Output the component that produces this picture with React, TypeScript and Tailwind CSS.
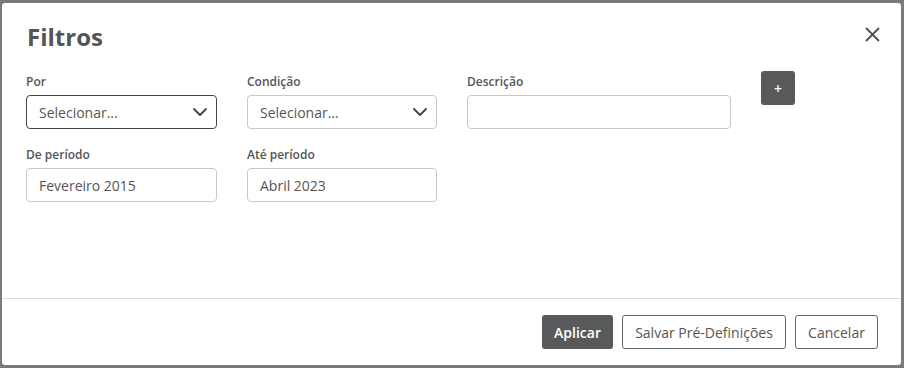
import { useState } from "react";

function Chevron() {
  return (
    <svg width="14" height="8" viewBox="0 0 14 8" fill="none" className="shrink-0">
      <path d="M1 1l6 6 6-6" stroke="#444" strokeWidth="1.8" strokeLinecap="round" strokeLinejoin="round" />
    </svg>
  );
}

interface FieldProps {
  label: string;
  width: string;
  children: React.ReactNode;
}

function Field({ label, width, children }: FieldProps) {
  return (
    <div className={`flex flex-col ${width}`}>
      <label className="text-[12px] leading-[17px] font-semibold text-[#555] mb-[5px]">{label}</label>
      {children}
    </div>
  );
}

function SelectBox({ focused }: { focused?: boolean }) {
  return (
    <div
      className={`h-[34px] rounded-[4px] border flex items-center justify-between pl-3 pr-[9px] text-[14px] text-[#555] ${
        focused ? "border-[#444]" : "border-[#c8c8c8]"
      }`}
    >
      <span>Selecionar...</span>
      <Chevron />
    </div>
  );
}

function TextBox({ value }: { value?: string }) {
  return (
    <div className="h-[34px] rounded-[4px] border border-[#c8c8c8] flex items-center px-3 text-[14px] text-[#555]">
      {value}
    </div>
  );
}

export default function App() {
  const [open] = useState(true);

  return (
    <div className="w-[904px] h-[368px] bg-[#7b7b7b] pt-[3px] pl-[2px]" style={{ fontFamily: '"Open Sans", sans-serif' }}>
      {open && (
        <div className="w-[899px] h-[362px] bg-white rounded-[3px] flex flex-col">
          <div className="flex-1 pt-[17px] pl-[24px] pr-[21px]">
            <div className="flex items-start justify-between">
              <h1 className="text-[24px] leading-[33px] font-bold text-[#555] ml-[1px]">Filtros</h1>
              <svg width="15" height="15" viewBox="0 0 15 15" className="mt-[7px]">
                <path d="M1.5 1.5l12 12M13.5 1.5l-12 12" stroke="#4f5048" strokeWidth="1.8" strokeLinecap="round" />
              </svg>
            </div>

            <div className="flex items-start mt-[20px]">
              <Field label="Por" width="w-[191px]">
                <SelectBox focused />
              </Field>
              <div className="ml-[30px]">
                <Field label="Condição" width="w-[190px]">
                  <SelectBox />
                </Field>
              </div>
              <div className="ml-[30px]">
                <Field label="Descrição" width="w-[264px]">
                  <TextBox />
                </Field>
              </div>
              <button className="ml-[30px] -mt-[2px] w-[34px] h-[34px] rounded-[3px] bg-[#58595b] text-white text-[14px] font-semibold flex items-center justify-center">
                +
              </button>
            </div>

            <div className="flex items-start mt-[17px]">
              <Field label="De período" width="w-[191px]">
                <TextBox value="Fevereiro 2015" />
              </Field>
              <div className="ml-[30px]">
                <Field label="Até período" width="w-[190px]">
                  <TextBox value="Abril 2023" />
                </Field>
              </div>
            </div>
          </div>

          <div className="border-t border-[#dcdcdc] h-[67px] flex items-center justify-end gap-[9px] pr-[23px]">
            <button className="h-[34px] w-[71px] rounded-[3px] bg-[#58595b] text-white text-[14px] font-semibold">
              Aplicar
            </button>
            <button className="h-[34px] w-[164px] rounded-[3px] border border-[#666] text-[#555] text-[14px]">
              Salvar Pré-Definições
            </button>
            <button className="h-[34px] w-[83px] rounded-[3px] border border-[#666] text-[#555] text-[14px]">
              Cancelar
            </button>
          </div>
        </div>
      )}
    </div>
  );
}
